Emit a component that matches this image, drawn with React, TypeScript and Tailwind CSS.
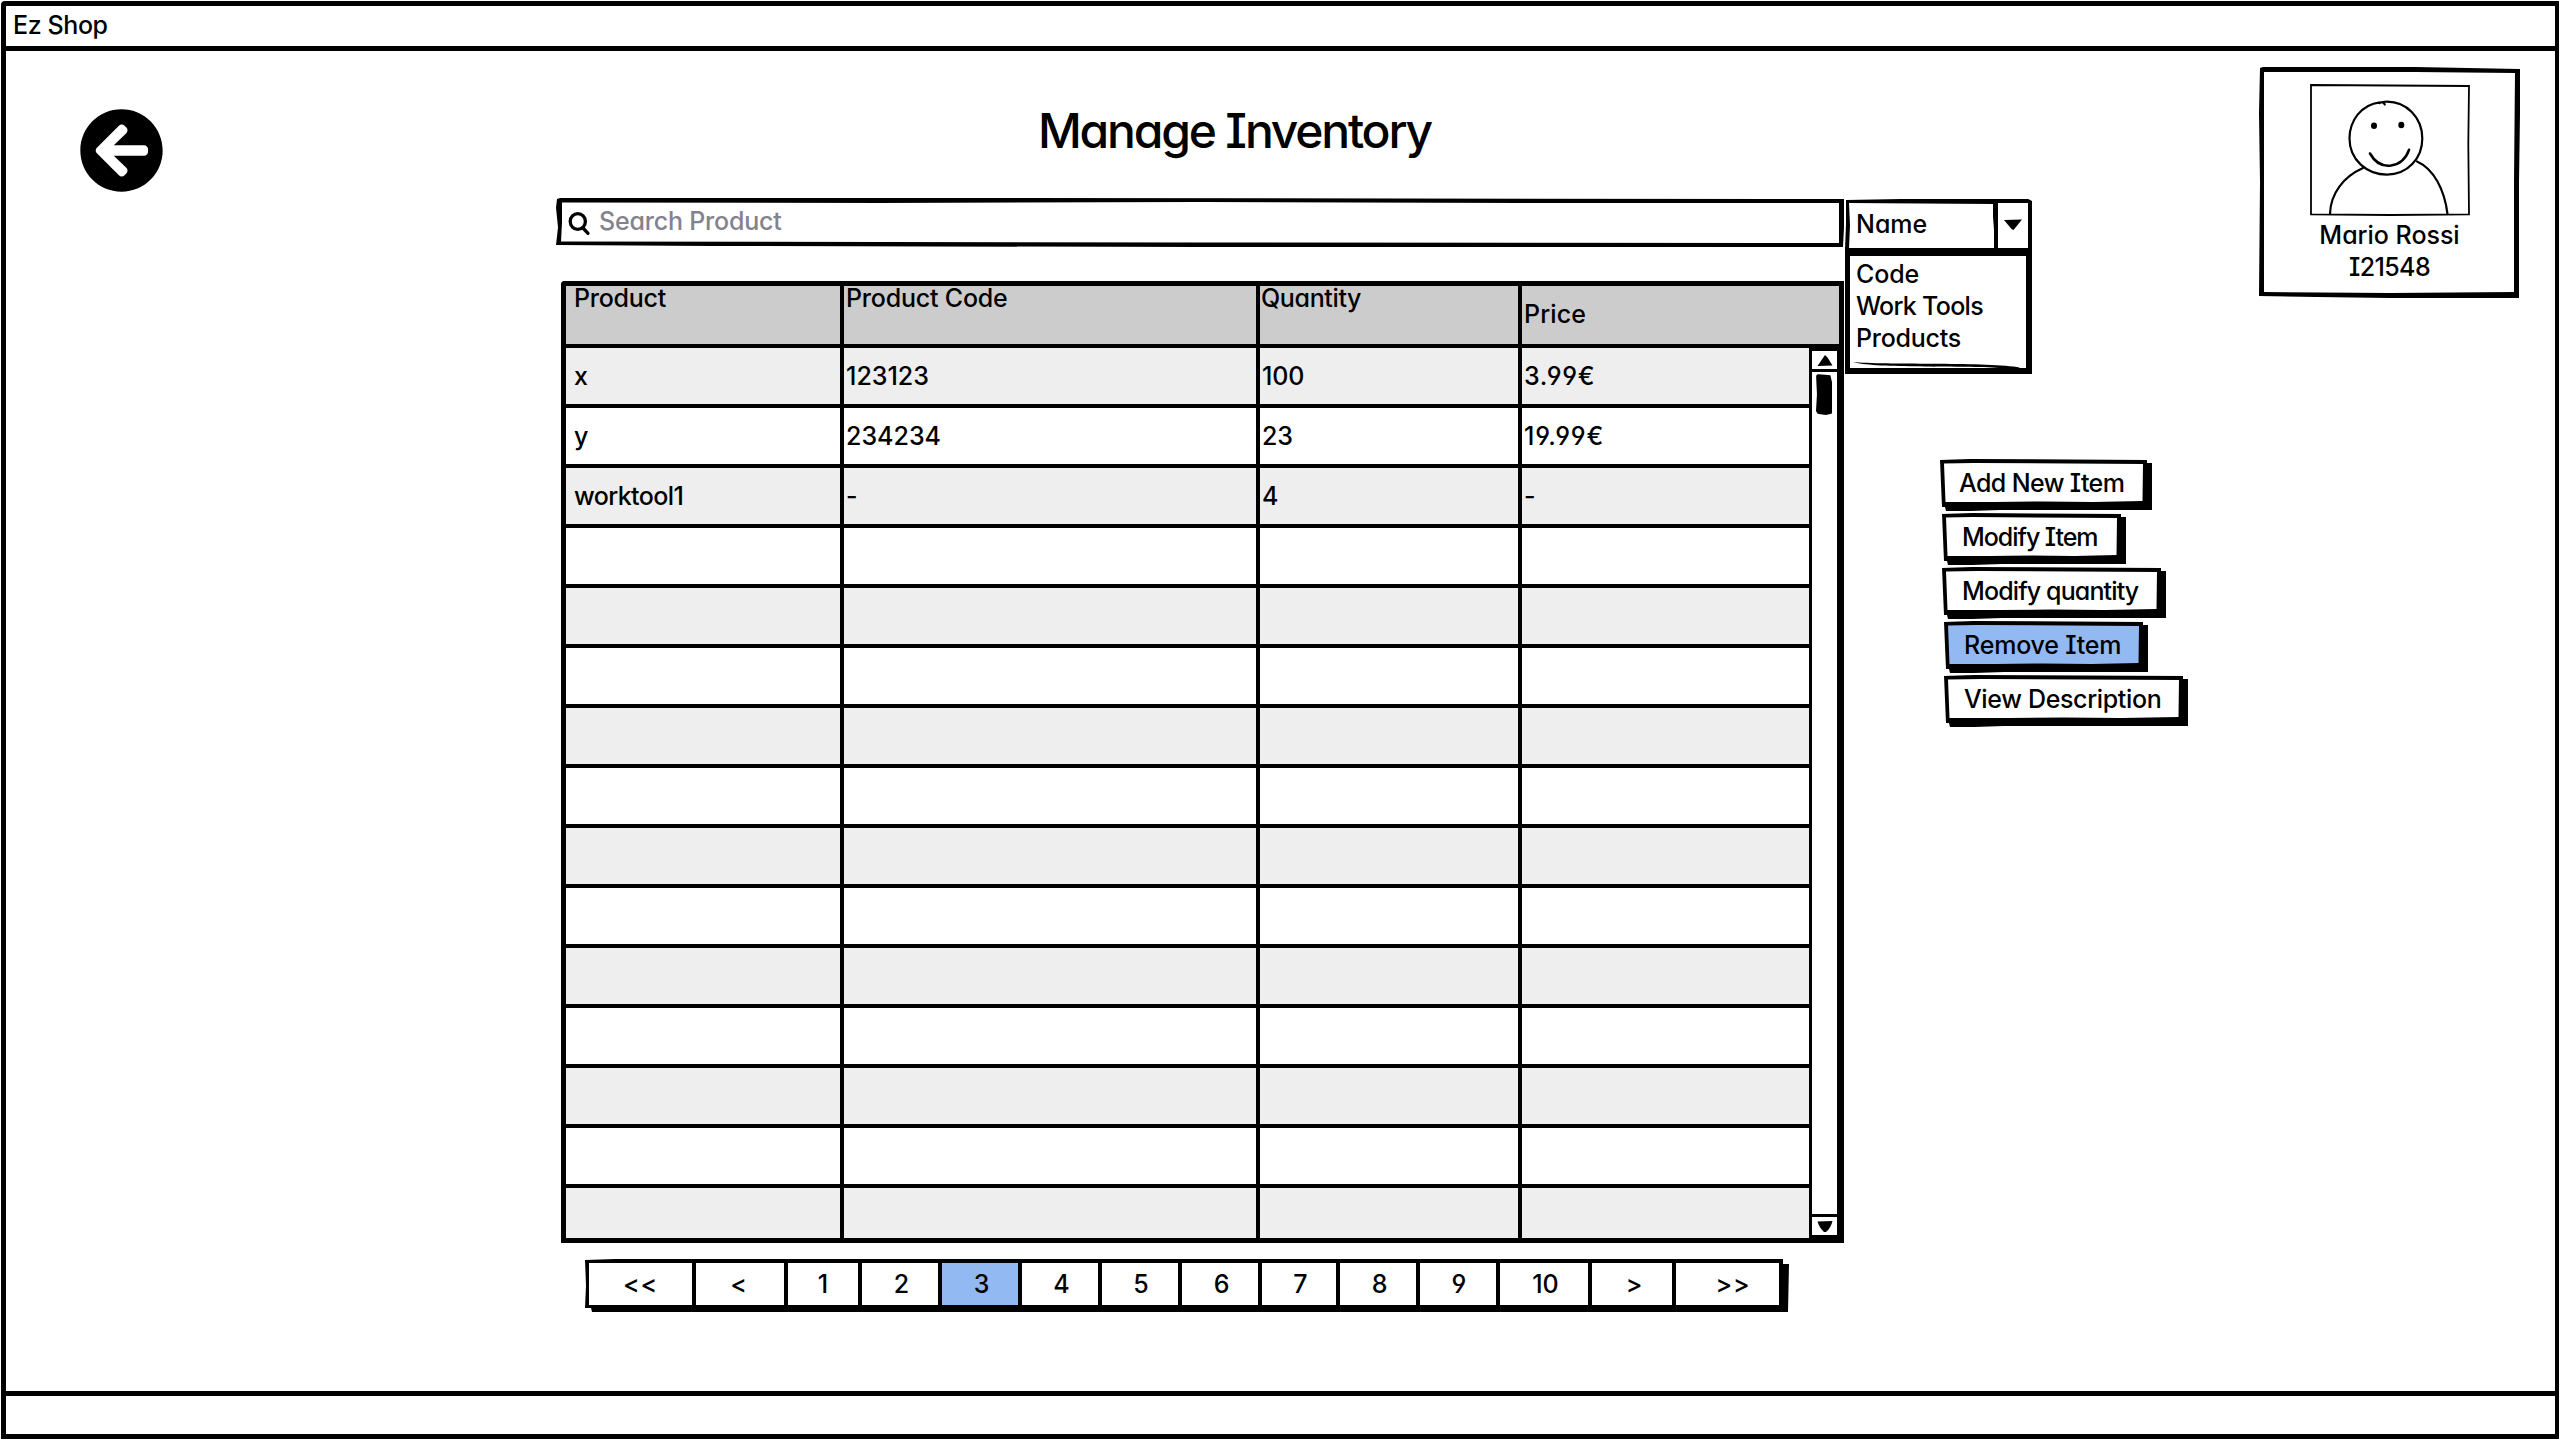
import type { ReactNode } from "react";
import { FaArrowCircleLeft } from "react-icons/fa";

type Label = { text: string; tracking: string };

const blank: Label = { text: "", tracking: "" };

const rows: Label[][] = [
  [
    { text: "x", tracking: "" },
    { text: "123123", tracking: "" },
    { text: "100", tracking: "tracking-[-0.1px]" },
    { text: "3.99€", tracking: "tracking-[0.7px]" },
  ],
  [
    { text: "y", tracking: "" },
    { text: "234234", tracking: "" },
    { text: "23", tracking: "tracking-[-0.1px]" },
    { text: "19.99€", tracking: "tracking-[0.75px]" },
  ],
  [
    { text: "worktool1", tracking: "tracking-[-0.6px]" },
    { text: "-", tracking: "" },
    { text: "4", tracking: "" },
    { text: "-", tracking: "" },
  ],
  ...Array.from({ length: 12 }, () => [blank, blank, blank, blank]),
];

const actions = [
  { text: "Add New Item", tracking: "tracking-[-0.6px]", box: "w-[212px]", pad: "pl-[15px]", active: false },
  { text: "Modify Item", tracking: "tracking-[-1.05px]", box: "ml-[2px] w-[184px]", pad: "pl-[16px]", active: false },
  { text: "Modify quantity", tracking: "tracking-[-0.87px]", box: "ml-[2px] w-[224px]", pad: "pl-[16px]", active: false },
  { text: "Remove Item", tracking: "tracking-[-0.2px]", box: "ml-[4px] w-[204px]", pad: "pl-[16px]", active: true },
  { text: "View Description", tracking: "tracking-[-0.35px]", box: "ml-[4px] w-[244px]", pad: "pl-[16px]", active: false },
];

const pages = [
  { text: "<<", width: "w-[103px]", tracking: "tracking-[0.9px]", active: false },
  { text: "<", width: "w-[88px] pr-[3px]", tracking: "", active: false },
  { text: "1", width: "w-[70px]", tracking: "", active: false },
  { text: "2", width: "w-[76px] pl-[3px]", tracking: "", active: false },
  { text: "3", width: "w-[76px] pl-[3px]", tracking: "", active: true },
  { text: "4", width: "w-[76px] pl-[3px]", tracking: "", active: false },
  { text: "5", width: "w-[76px] pl-[2px]", tracking: "", active: false },
  { text: "6", width: "w-[76px] pl-[3px]", tracking: "", active: false },
  { text: "7", width: "w-[74px] pl-[3px]", tracking: "", active: false },
  { text: "8", width: "w-[76px] pl-[3px]", tracking: "", active: false },
  { text: "9", width: "w-[76px] pl-[2px]", tracking: "", active: false },
  { text: "10", width: "w-[88px] pl-[3px]", tracking: "", active: false },
  { text: ">", width: "w-[80px] pl-[4px]", tracking: "", active: false },
  { text: ">>", width: "w-[103px] pl-[11px]", tracking: "tracking-[0.9px]", active: false },
];

function ActionButton({ text, tracking, box, pad, active }: (typeof actions)[number]) {
  return (
    <button
      className={`flex h-[52px] bg-black pt-1 pr-[9px] pb-[9px] pl-1 [clip-path:polygon(0_1px,30px_0,calc(100%-5px)_1px,calc(100%-5px)_4px,100%_4px,100%_calc(100%-1px),60px_calc(100%-1px),30px_100%,6px_100%,5px_calc(100%-4px),2px_calc(100%-4px))] ${box}`}
    >
      <span
        className={`flex h-full w-full items-center whitespace-nowrap pt-px [clip-path:polygon(0_0.5px,15%_0,100%_1px,calc(100%-0.5px)_calc(100%-1px),75%_100%,50%_calc(100%-0.5px),25%_100%,1.5px_100%)] ${pad} ${tracking} ${active ? "bg-[#93b9f2]" : "bg-white"}`}
      >
        {text}
      </span>
    </button>
  );
}

function Portrait() {
  return (
    <svg width="160" height="132" viewBox="0 0 160 132" fill="none" stroke="black" strokeLinecap="round">
      <path d="M1 1 L159 2 L158.3 60 L159 130.3 L80 131 L1 130.3 Z" strokeWidth="1.8" />
      <path
        d="M73.5 19.2 C75 19.6 74.5 20 74.8 20.6 M70 18.3 C51 20.5 39.5 37 39.5 54.5 C39.5 76 57 90.6 77 90.6 C98 90.6 112.3 74 112.3 54.5 C112.3 33 96 17.6 77 17.6 C74 17.6 71 18.2 69.5 19"
        strokeWidth="2.2"
      />
      <path d="M53 84 C34 92.500 20.500 109 20 130" strokeWidth="2.2" />
      <path d="M107 77.500 C124 85 134.500 106 137.500 130" strokeWidth="2.2" />
      <path d="M60 69.500 C67.500 83 77 82 81 81.500 C90 80 96 74.500 99 65.800" strokeWidth="2.6" />
      <ellipse cx="64" cy="41.700" rx="3" ry="3.200" fill="black" stroke="none" />
      <ellipse cx="91.300" cy="41" rx="3" ry="3.200" fill="black" stroke="none" />
    </svg>
  );
}

function ProfileCard() {
  return (
    <div className="mt-[16px] mr-[35px] h-[231px] w-[261px] shrink-0 bg-black p-[5px] [clip-path:polygon(1px_1px,4px_0,60%_0,100%_2px,100%_20%,calc(100%-1px)_50%,calc(100%-1px)_100%,50%_100%,22%_calc(100%-1px),0_calc(100%-2px),1px_50%,0_20%)]">
      <div className="flex h-full w-full flex-col items-center bg-white pt-[12px] [clip-path:polygon(0_0,45%_0,60%_0,100%_1px,calc(100%-1px)_50%,calc(100%-1px)_calc(100%-1px),50%_100%,0_calc(100%-1px),0_50%)]">
        <Portrait />
        <p className="mt-[3px] leading-8 tracking-[-0.02px]">Mario Rossi</p>
        <p className="leading-8 tracking-[-0.6px]">I21548</p>
      </div>
    </div>
  );
}

function SearchBar() {
  return (
    <div className="h-[49px] w-[1288px] bg-black px-[5px] pt-[4px] pb-[4px] [clip-path:polygon(1px_1px,4px_0,30%_0,100%_1px,100%_45%,100%_60%,calc(100%-1px)_100%,50%_100%,12%_calc(100%-1px),0_calc(100%-2px),2px_60%,0_20%)]">
      <div className="flex h-full w-full items-center bg-white pl-[7px] text-[#84828e] [clip-path:polygon(1px_0.5px,25%_1px,50%_0,75%_1px,100%_1px,100%_100%,50%_calc(100%-0.5px),0_calc(100%-1.5px),1px_50%)]">
        <svg width="24" height="26" viewBox="0 0 24 26" fill="none" stroke="black" strokeWidth="3.300" strokeLinecap="round">
          <ellipse cx="9.800" cy="11.500" rx="7.600" ry="7.900" />
          <path d="M15 18 L20 23.300" />
        </svg>
        <span className="ml-[7px] pb-[3px] tracking-[-0.2px]">Search Product</span>
      </div>
    </div>
  );
}

function HeaderCell({ children, className = "" }: { children: ReactNode; className?: string }) {
  return <div className={`border-black leading-6 ${className}`}>{children}</div>;
}

function Scrollbar() {
  return (
    <div className="flex w-[28px] flex-col border-l-[3px] border-black bg-white">
      <div className="flex h-[24px] items-start justify-center border-t-[3px] border-b-[3px] border-black pt-[4px]">
        <svg width="16" height="11" viewBox="0 0 16 11">
          <path d="M8 0 L10.500 2.500 L15.500 10.500 L0.500 11 Z" />
        </svg>
      </div>
      <div className="mt-[2px] ml-[4px] h-[41px] w-[16px] rounded-[3px] bg-black [clip-path:polygon(0_0,90%_3%,100%_20%,100%_97%,60%_100%,10%_97%,0_90%,6%_50%)]" />
      <div className="mt-auto flex h-[24px] items-start justify-center border-t-[3px] border-b-[3px] border-black pt-[4px]">
        <svg width="16" height="11" viewBox="0 0 16 11">
          <path d="M0.500 0.500 L15.500 0 C14.500 4 12.500 8.500 9 11 L7 11 C4 8.500 1.500 4 0.500 0.500 Z" />
        </svg>
      </div>
    </div>
  );
}

function InventoryTable() {
  return (
    <div className="ml-[5px] h-[962px] w-[1283px] rounded-tl-[4px] border-t-[5px] border-b-[5px] border-l-[5px] border-black">
      <div className="grid h-[62px] grid-cols-[278px_416px_262px_1fr] border-r-[5px] border-b-4 border-black bg-[#cccccc]">
        <HeaderCell className="border-r-4 pl-[8px] tracking-[-0.25px]">Product</HeaderCell>
        <HeaderCell className="border-r-4 pl-[2px] tracking-[-0.2px]">Product Code</HeaderCell>
        <HeaderCell className="border-r-4 pl-[1px] tracking-[-0.35px]">Quantity</HeaderCell>
        <HeaderCell className="pt-[16px] pl-[2px] tracking-[0.15px]">Price</HeaderCell>
      </div>
      <div className="flex h-[890px] border-r-[7px] border-black">
        <div className="flex-1">
          {rows.map((cells, i) => (
            <div
              key={i}
              className="grid h-[60px] grid-cols-[278px_416px_262px_1fr] border-b-4 border-black last:h-[50px] last:border-b-0 odd:bg-[#eeeeee] even:bg-white"
            >
              {cells.map((cell, j) => (
                <div
                  key={j}
                  className={`flex items-center border-black pl-[2px] first:pl-[8px] not-last:border-r-4 ${cell.tracking}`}
                >
                  {cell.text}
                </div>
              ))}
            </div>
          ))}
        </div>
        <Scrollbar />
      </div>
    </div>
  );
}

function Pagination() {
  return (
    <nav className="ml-[29px] flex h-[53px] w-[1204px] bg-black pt-[4px] pr-[10px] pb-[7px] pl-[4px] [clip-path:polygon(0_1px,30px_0,calc(100%-6px)_0,calc(100%-6px)_5px,100%_5px,calc(100%-1px)_100%,7px_100%,6px_calc(100%-4px),0_calc(100%-4px),1px_50%)]">
      <div className="flex gap-[4px]">
        {pages.map((p) => (
          <div
            key={p.text}
            className={`flex h-[42px] shrink-0 items-center justify-center pb-px ${p.width} ${p.tracking} ${p.active ? "bg-[#93b9f2]" : "bg-white"}`}
          >
            {p.text}
          </div>
        ))}
      </div>
    </nav>
  );
}

function FilterSelect() {
  return (
    <div className="mt-[148px] ml-[1px] w-[187px]">
      <div className="flex h-[50px] bg-black px-[4px] pt-[4px] [clip-path:polygon(1px_1px,30%_0,98%_0,100%_2px,100%_100%,0_100%,1px_50%)]">
        <div className="flex h-[45px] w-[145px] items-center bg-white pb-[4px] pl-[7px] [clip-path:polygon(0_0,calc(100%-1px)_1px,calc(100%-1px)_30%,100%_60%,100%_100%,0_100%,1px_50%)]">
          Name
        </div>
        <div className="ml-[4px] flex h-[45px] flex-1 items-center justify-center bg-white pb-[3px]">
          <svg width="18" height="11" viewBox="0 0 18 11">
            <path d="M0 1 L18 0.500 L9.500 11 L7.500 10 Z" />
          </svg>
        </div>
      </div>
      <div className="h-[125px] border-[6px] border-t-[7px] border-l-[5px] border-black bg-white pl-[6px]">
        <p className="mt-[2px] leading-8 tracking-[-0.1px]">Code</p>
        <p className="leading-8 tracking-[-0.7px]">Work Tools</p>
        <p className="leading-8 tracking-[-0.25px]">Products</p>
        <svg className="mt-[8px] -ml-[4px]" width="170" height="8" viewBox="0 0 170 8">
          <path d="M1 0 C30 3 130 0 165 5 C169 6 169.500 7 166 7.500 L140 5.500 C100 4 20 6 1 0 Z" />
        </svg>
      </div>
    </div>
  );
}

export default function App() {
  return (
    <div className="h-[1440px] w-[2560px] bg-white p-px font-['Inter',sans-serif] text-[25px] leading-[30px] font-[450] text-black [font-feature-settings:'cv11','cv08','cv04']">
      <div className="flex h-[1438px] w-[2558px] flex-col rounded-tl-[4px] border-[5px] border-r-[4px] border-black">
        <header className="flex h-[45px] shrink-0 items-center border-b-[5px] border-black pb-[2px] pl-[7px] tracking-[-0.4px]">
          Ez Shop
        </header>

        <main className="flex min-h-0 flex-1">
          <aside className="w-[550px] shrink-0 pt-[57px] pl-[73px]">
            <FaArrowCircleLeft size={85} />
          </aside>

          <section className="w-[1288px] shrink-0">
            <h1 className="mt-[65px] mb-[52px] h-[30px] pl-[482px] text-[48px] tracking-[-2.2px] whitespace-nowrap">
              Manage Inventory
            </h1>
            <SearchBar />
            <div className="mt-[34px] mb-[16px]">
              <InventoryTable />
            </div>
            <Pagination />
          </section>

          <section className="flex flex-1 flex-col">
            <div className="flex h-[408px] items-start justify-between">
              <FilterSelect />
              <ProfileCard />
            </div>
            <div className="ml-[96px] flex flex-col gap-[2px]">
              {actions.map((a) => (
                <ActionButton key={a.text} {...a} />
              ))}
            </div>
          </section>
        </main>

        <footer className="h-[43px] shrink-0 border-t-[5px] border-black" />
      </div>
    </div>
  );
}
